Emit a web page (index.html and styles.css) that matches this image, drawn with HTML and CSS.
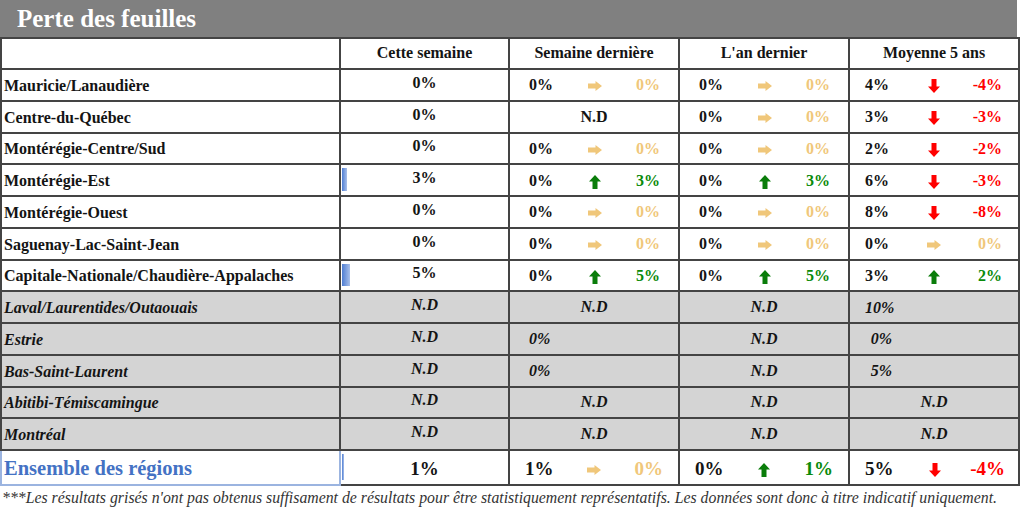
FILE: index.html
```html
<!DOCTYPE html>
<html lang="fr">
<head>
<meta charset="utf-8">
<title>Perte des feuilles</title>
<link rel="stylesheet" href="styles.css">
</head>
<body>
<svg class="defs" aria-hidden="true">
  <defs>
    <symbol id="a-right" viewBox="0 0 14 10"><polygon points="0,2.5 7.5,2.5 7.5,0 14,5 7.5,10 7.5,7.5 0,7.5"/></symbol>
    <symbol id="a-up" viewBox="0 0 12 14"><polygon points="6,0 12,6.5 8.5,6.5 8.5,14 3.5,14 3.5,6.5 0,6.5"/></symbol>
    <symbol id="a-down" viewBox="0 0 12 14"><polygon points="3.5,0 8.5,0 8.5,7.5 12,7.5 6,14 0,7.5 3.5,7.5"/></symbol>
  </defs>
</svg>

<h1 class="title">Perte des feuilles</h1>

<table class="grid">
  <colgroup>
    <col class="c-name"><col class="c-week"><col class="c-cmp"><col class="c-cmp"><col class="c-cmp">
  </colgroup>
  <thead>
    <tr>
      <th></th>
      <th>Cette semaine</th>
      <th>Semaine dernière</th>
      <th>L'an dernier</th>
      <th>Moyenne 5 ans</th>
    </tr>
  </thead>
  <tbody>
    <tr>
      <td class="name">Mauricie/Lanaudière</td>
      <td class="week">0%</td>
      <td><div class="cmp"><span class="v-from">0%</span><svg class="ar ar-r"><use href="#a-right"/></svg><span class="v-to v-flat">0%</span></div></td>
      <td><div class="cmp"><span class="v-from">0%</span><svg class="ar ar-r"><use href="#a-right"/></svg><span class="v-to v-flat">0%</span></div></td>
      <td><div class="cmp avg"><span class="v-from">4%</span><svg class="ar ar-d"><use href="#a-down"/></svg><span class="v-to v-down">-4%</span></div></td>
    </tr>
    <tr>
      <td class="name">Centre-du-Québec</td>
      <td class="week">0%</td>
      <td class="center">N.D</td>
      <td><div class="cmp"><span class="v-from">0%</span><svg class="ar ar-r"><use href="#a-right"/></svg><span class="v-to v-flat">0%</span></div></td>
      <td><div class="cmp avg"><span class="v-from">3%</span><svg class="ar ar-d"><use href="#a-down"/></svg><span class="v-to v-down">-3%</span></div></td>
    </tr>
    <tr>
      <td class="name">Montérégie-Centre/Sud</td>
      <td class="week">0%</td>
      <td><div class="cmp"><span class="v-from">0%</span><svg class="ar ar-r"><use href="#a-right"/></svg><span class="v-to v-flat">0%</span></div></td>
      <td><div class="cmp"><span class="v-from">0%</span><svg class="ar ar-r"><use href="#a-right"/></svg><span class="v-to v-flat">0%</span></div></td>
      <td><div class="cmp avg"><span class="v-from">2%</span><svg class="ar ar-d"><use href="#a-down"/></svg><span class="v-to v-down">-2%</span></div></td>
    </tr>
    <tr>
      <td class="name">Montérégie-Est</td>
      <td class="week"><span class="bar" style="width:5px"></span>3%</td>
      <td><div class="cmp"><span class="v-from">0%</span><svg class="ar ar-u"><use href="#a-up"/></svg><span class="v-to v-up">3%</span></div></td>
      <td><div class="cmp"><span class="v-from">0%</span><svg class="ar ar-u"><use href="#a-up"/></svg><span class="v-to v-up">3%</span></div></td>
      <td><div class="cmp avg"><span class="v-from">6%</span><svg class="ar ar-d"><use href="#a-down"/></svg><span class="v-to v-down">-3%</span></div></td>
    </tr>
    <tr>
      <td class="name">Montérégie-Ouest</td>
      <td class="week">0%</td>
      <td><div class="cmp"><span class="v-from">0%</span><svg class="ar ar-r"><use href="#a-right"/></svg><span class="v-to v-flat">0%</span></div></td>
      <td><div class="cmp"><span class="v-from">0%</span><svg class="ar ar-r"><use href="#a-right"/></svg><span class="v-to v-flat">0%</span></div></td>
      <td><div class="cmp avg"><span class="v-from">8%</span><svg class="ar ar-d"><use href="#a-down"/></svg><span class="v-to v-down">-8%</span></div></td>
    </tr>
    <tr>
      <td class="name">Saguenay-Lac-Saint-Jean</td>
      <td class="week">0%</td>
      <td><div class="cmp"><span class="v-from">0%</span><svg class="ar ar-r"><use href="#a-right"/></svg><span class="v-to v-flat">0%</span></div></td>
      <td><div class="cmp"><span class="v-from">0%</span><svg class="ar ar-r"><use href="#a-right"/></svg><span class="v-to v-flat">0%</span></div></td>
      <td><div class="cmp avg"><span class="v-from">0%</span><svg class="ar ar-r"><use href="#a-right"/></svg><span class="v-to v-flat">0%</span></div></td>
    </tr>
    <tr>
      <td class="name">Capitale-Nationale/Chaudière-Appalaches</td>
      <td class="week"><span class="bar" style="width:8px"></span>5%</td>
      <td><div class="cmp"><span class="v-from">0%</span><svg class="ar ar-u"><use href="#a-up"/></svg><span class="v-to v-up">5%</span></div></td>
      <td><div class="cmp"><span class="v-from">0%</span><svg class="ar ar-u"><use href="#a-up"/></svg><span class="v-to v-up">5%</span></div></td>
      <td><div class="cmp avg"><span class="v-from">3%</span><svg class="ar ar-u"><use href="#a-up"/></svg><span class="v-to v-up">2%</span></div></td>
    </tr>
    <tr class="grey">
      <td class="name">Laval/Laurentides/Outaouais</td>
      <td class="week">N.D</td>
      <td class="center">N.D</td>
      <td class="center">N.D</td>
      <td><div class="cmp avg"><span class="v-from ra">10%</span></div></td>
    </tr>
    <tr class="grey">
      <td class="name">Estrie</td>
      <td class="week">N.D</td>
      <td><div class="cmp"><span class="v-from">0%</span></div></td>
      <td class="center">N.D</td>
      <td><div class="cmp avg"><span class="v-from ra">0%</span></div></td>
    </tr>
    <tr class="grey">
      <td class="name">Bas-Saint-Laurent</td>
      <td class="week">N.D</td>
      <td><div class="cmp"><span class="v-from">0%</span></div></td>
      <td class="center">N.D</td>
      <td><div class="cmp avg"><span class="v-from ra">5%</span></div></td>
    </tr>
    <tr class="grey">
      <td class="name">Abitibi-Témiscamingue</td>
      <td class="week">N.D</td>
      <td class="center">N.D</td>
      <td class="center">N.D</td>
      <td class="center">N.D</td>
    </tr>
    <tr class="grey">
      <td class="name">Montréal</td>
      <td class="week">N.D</td>
      <td class="center">N.D</td>
      <td class="center">N.D</td>
      <td class="center">N.D</td>
    </tr>
    <tr class="total">
      <td class="name">Ensemble des régions</td>
      <td class="week"><span class="bar" style="width:2px"></span>1%</td>
      <td><div class="cmp"><span class="v-from">1%</span><svg class="ar ar-r"><use href="#a-right"/></svg><span class="v-to v-flat">0%</span></div></td>
      <td><div class="cmp"><span class="v-from">0%</span><svg class="ar ar-u"><use href="#a-up"/></svg><span class="v-to v-up">1%</span></div></td>
      <td><div class="cmp avg"><span class="v-from">5%</span><svg class="ar ar-d"><use href="#a-down"/></svg><span class="v-to v-down">-4%</span></div></td>
    </tr>
  </tbody>
</table>

<p class="note">***Les résultats grisés n'ont pas obtenus suffisament de résultats pour être statistiquement représentatifs. Les données sont donc à titre indicatif uniquement.</p>
</body>
</html>
```

FILE: styles.css
```css
* { box-sizing: border-box; }

body {
  margin: 0;
  background: #fff;
  color: #141414;
  font-family: "Liberation Serif", "Times New Roman", serif;
}

.defs { position: absolute; width: 0; height: 0; overflow: hidden; }

.title {
  margin: 0;
  width: 1017px;
  height: 37px;
  padding-left: 17px;
  background: #808080;
  color: #fff;
  font-family: "Liberation Serif", "Times New Roman", serif;
  font-size: 25px;
  font-weight: bold;
  line-height: 37px;
}

.grid {
  width: 1018px;
  border-collapse: collapse;
  table-layout: fixed;
  font-family: "Liberation Serif", "Times New Roman", serif;
  font-size: 16px;
  font-weight: bold;
}

.c-name { width: 339px; }
.c-week { width: 169px; }
.c-cmp { width: 170px; }

.grid th,
.grid td {
  border: 2px solid #444;
  padding: 0;
  vertical-align: middle;
  white-space: nowrap;
}

.grid thead tr { height: 31px; }
.grid tbody tr { height: 31.75px; }

.grid th { text-align: center; padding-bottom: 2px; }

.grid .name { text-align: left; padding: 2px 0 0 2px; }

.grid .week {
  position: relative;
  text-align: center;
  padding-bottom: 4px;
}

.center { text-align: center; }

.bar {
  position: absolute;
  left: 1px;
  top: 3px;
  bottom: 4px;
  background: linear-gradient(to right, #4f7ed3, #a9c0ea);
}

.cmp {
  display: grid;
  grid-template-columns: 1fr auto 1fr;
  align-items: center;
  padding: 1px 18px 0 19px;
}
.cmp .v-from { grid-column: 1; justify-self: start; }
.cmp .ar { grid-column: 2; }
.cmp .v-to { grid-column: 3; justify-self: end; }
.cmp.avg { padding: 1px 16px 0 15px; }

.ar { display: block; }
.ar-r { width: 14px; height: 10px; fill: #f0c77a; margin-top: 2px; }
.ar-u { width: 12px; height: 14px; fill: #0a7d0a; margin-top: 3px; }
.ar-d { width: 12px; height: 14px; fill: #ff0000; margin-top: 2px; }

.v-flat { color: #f0c77a; }
.v-up { color: #0a8a0a; }
.v-down { color: #ff0000; }

.grey td { background: #d4d4d4; font-style: italic; }

.cmp .ra { display: inline-block; width: 27px; text-align: right; }

.total { height: 35px !important; }
.grid .total .name {
  color: #4472c4;
  font-size: 20.5px;
  border: 2px solid #9bb4e0;
  border-top-color: #444;
}
.grid .total .week { padding: 2px 0 0 0; }
.total .week,
.total .cmp { font-size: 19px; }
.total .cmp { padding: 2px 15px 0 15px; }
.total .cmp.avg { padding: 2px 13px 0 15px; }

.note {
  margin: 3px 0 0 2px;
  font-family: "Liberation Serif", "Times New Roman", serif;
  font-size: 15.8px;
  font-style: italic;
  color: #333;
  white-space: nowrap;
}
```
